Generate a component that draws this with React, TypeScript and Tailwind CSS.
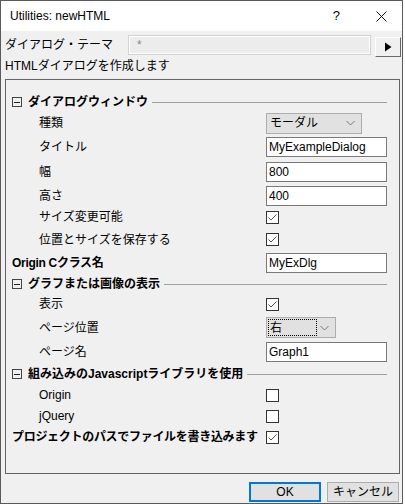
import React from 'react';

const font = "font-['Liberation_Sans','Noto_Sans_CJK_JP',sans-serif]";

function Check({ checked }: { checked: boolean }) {
  return (
    <div className="w-[13px] h-[13px] border border-[#333] bg-white flex items-center justify-center">
      {checked && (
        <svg width="11" height="11" viewBox="0 0 11 11">
          <path d="M1.5 5.5 L4 8 L9.5 2.5" fill="none" stroke="#555" strokeWidth="1" />
        </svg>
      )}
    </div>
  );
}

function Chevron() {
  return (
    <svg width="9" height="6" viewBox="0 0 9 6" className="shrink-0">
      <path d="M0.5 1 L4.5 5 L8.5 1" fill="none" stroke="#777" strokeWidth="1" />
    </svg>
  );
}

function TextBox({ value }: { value: string }) {
  return (
    <div className="w-[121px] h-[20px] border border-[#7a7a7a] bg-white pl-[2px] flex items-center text-[12px] leading-[14px] text-black">
      {value}
    </div>
  );
}

function Header({ title }: { title: string }) {
  return (
    <div className="flex items-center h-[20px] pl-[6px] pr-[12px]">
      <div className="w-[10px] h-[10px] border border-[#444] flex items-center justify-center shrink-0">
        <div className="w-[6px] h-px bg-[#222]" />
      </div>
      <span className="ml-[6px] text-[12px] leading-[14px] font-bold text-black whitespace-nowrap">{title}</span>
      <div className="flex-1 h-px bg-[#a0a0a0] ml-[4px]" />
    </div>
  );
}

function Row({ label, h, bold, children }: { label: string; h: string; bold?: boolean; children: React.ReactNode }) {
  return (
    <div className={`flex items-center ${h}`}>
      <div
        className={`w-[260px] shrink-0 text-[12px] leading-[14px] text-black whitespace-nowrap ${
          bold ? 'pl-[6px] font-bold tracking-[-0.3px]' : 'pl-[33px]'
        }`}
      >
        {label}
      </div>
      {children}
    </div>
  );
}

export default function App() {
  return (
    <div className={`w-[405px] h-[504px] bg-white ${font}`}>
      <div className="w-[403px] h-[504px] border border-[#5a5a5a] bg-[#f0f0f0] flex flex-col">
        {/* Title bar */}
        <div className="h-[30px] bg-white flex items-center shrink-0">
          <span className="pl-[9px] text-[12px] text-black">Utilities: newHTML</span>
          <span className="ml-auto text-[13px] text-black mr-[36px]">?</span>
          <svg width="11" height="11" viewBox="0 0 11 11" className="mr-[15px]">
            <path d="M0.5 0.5 L10.5 10.5 M10.5 0.5 L0.5 10.5" stroke="#111" strokeWidth="1" />
          </svg>
        </div>

        {/* Theme row */}
        <div className="flex items-start pt-[4px] h-[26px]">
          <div className="w-[127px] pl-[4px] text-[12px] leading-[14px] mt-[3px] text-black whitespace-nowrap">
            ダイアログ・テーマ
          </div>
          <div className="w-[243px] h-[20px] border border-[#d2d2d2] bg-white p-px">
            <div className="w-full h-full bg-[#ececec] pl-[7px] text-[12px] leading-[16px] text-[#888]">*</div>
          </div>
          <div className="ml-[4px] mt-[2px] w-[26px] h-[20px] bg-[#f0f0f0] border-t border-l border-white border-b border-r border-b-[#696969] border-r-[#696969] flex items-center justify-center">
            <svg width="8" height="10" viewBox="0 0 8 10">
              <path d="M1 0.5 L7.5 5 L1 9.5 Z" fill="#000" />
            </svg>
          </div>
        </div>

        <div className="pl-[4px] mt-[2px] text-[12px] leading-[14px] text-black">HTMLダイアログを作成します</div>

        {/* Group box */}
        <div className="ml-[4px] mt-[6px] w-[395px] h-[395px] border border-[#646464] pt-[12px] flex flex-col shrink-0">
          <Header title="ダイアログウィンドウ" />
          <Row label="種類" h="h-[22px]">
            <div className="w-[96px] h-[21px] bg-[#e1e1e1] border border-[#adadad] flex items-center pl-[3px] pr-[6px] text-[12px] leading-[14px]">
              <span className="flex-1">モーダル</span>
              <Chevron />
            </div>
          </Row>
          <Row label="タイトル" h="h-[26px]">
            <TextBox value="MyExampleDialog" />
          </Row>
          <Row label="幅" h="h-[23px]">
            <TextBox value="800" />
          </Row>
          <Row label="高さ" h="h-[25px]">
            <TextBox value="400" />
          </Row>
          <Row label="サイズ変更可能" h="h-[18px]">
            <Check checked />
          </Row>
          <Row label="位置とサイズを保存する" h="h-[27px]">
            <Check checked />
          </Row>
          <Row label="Origin Cクラス名" h="h-[20px]" bold>
            <TextBox value="MyExDlg" />
          </Row>
          <div className="h-[22px] flex items-center">
            <div className="w-full">
              <Header title="グラフまたは画像の表示" />
            </div>
          </div>
          <Row label="表示" h="h-[18px]">
            <Check checked />
          </Row>
          <Row label="ページ位置" h="h-[29px]">
            <div className="w-[70px] h-[21px] bg-[#e1e1e1] border border-[#adadad] flex items-center pl-px pr-[6px] text-[12px] leading-[14px]">
              <div className="w-[49px] h-[17px] border border-dotted border-black flex items-center pl-px">右</div>
              <div className="flex-1" />
              <Chevron />
            </div>
          </Row>
          <Row label="ページ名" h="h-[20px]">
            <TextBox value="Graph1" />
          </Row>
          <div className="h-[24px] flex items-center">
            <div className="w-full">
              <Header title="組み込みのJavascriptライブラリを使用" />
            </div>
          </div>
          <Row label="Origin" h="h-[18px]">
            <Check checked={false} />
          </Row>
          <Row label="jQuery" h="h-[24px]">
            <Check checked={false} />
          </Row>
          <Row label="プロジェクトのパスでファイルを書き込みます" h="h-[18px]" bold>
            <Check checked />
          </Row>
        </div>

        {/* Buttons */}
        <div className="flex justify-end gap-[6px] pr-[3px] mt-[8px]">
          <div className="w-[72px] h-[20px] border-2 border-[#0078d7] bg-[#e1e1e1] flex items-center justify-center text-[12px] text-black">
            OK
          </div>
          <div className="w-[72px] h-[20px] border border-[#adadad] bg-[#e1e1e1] flex items-center justify-center text-[12px] text-black">
            キャンセル
          </div>
        </div>
      </div>
    </div>
  );
}
